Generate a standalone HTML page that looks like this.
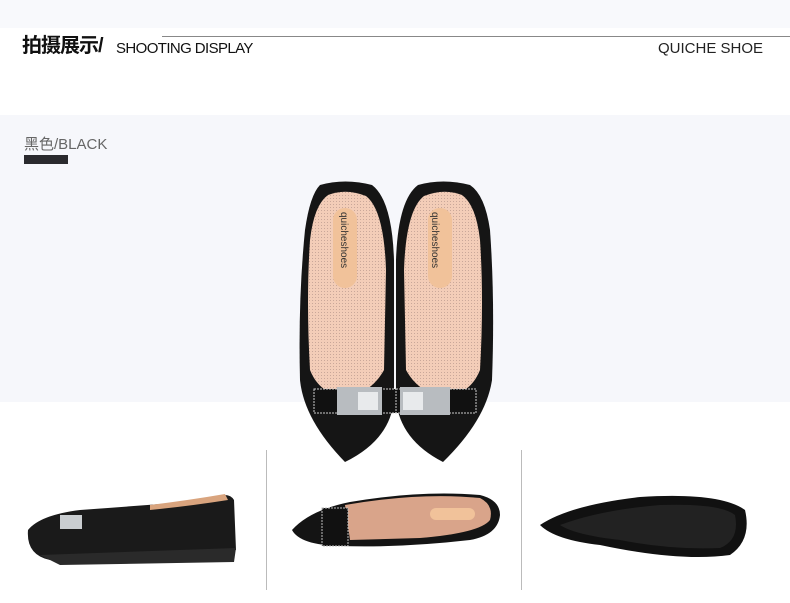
<!DOCTYPE html>
<html><head><meta charset="utf-8"><style>
body{margin:0;width:790px;height:603px;background:#fff;position:relative;overflow:hidden;font-family:"Liberation Sans","Noto Sans CJK SC",sans-serif}
.t{position:absolute;line-height:1}
</style></head><body>
<div class="t" style="left:0;top:0;width:790px;height:28px;background:#f8f9fc"></div>
<div class="t" style="left:162px;top:36px;width:628px;height:1px;background:#888"></div>
<div class="t" style="left:22px;top:36px;font-size:20px;color:#111;letter-spacing:-1px;font-weight:bold">拍摄展示/</div>
<div class="t" style="left:116px;top:41px;font-size:15px;color:#111;letter-spacing:-0.6px">SHOOTING DISPLAY</div>
<div class="t" style="left:658px;top:41px;font-size:15px;color:#222">QUICHE SHOE</div>
<div class="t" style="left:0;top:115px;width:790px;height:287px;background:#f6f7fb"></div>
<div class="t" style="left:24px;top:137px;font-size:15px;color:#666">黑色/BLACK</div>
<div class="t" style="left:24px;top:155px;width:44px;height:9px;background:#2a2a2e"></div>
<div class="t" style="left:266px;top:450px;width:1px;height:140px;background:#bbb"></div>
<div class="t" style="left:521px;top:450px;width:1px;height:140px;background:#bbb"></div>
<svg class="t" style="left:0;top:0" width="790" height="603">
<defs><pattern id="m" width="3" height="3" patternUnits="userSpaceOnUse"><rect width="3" height="3" fill="#f3cdb8"/><rect width="1" height="1" fill="#c9a799"/></pattern></defs>
<path d="M320 185 Q345 178 372 185 Q392 200 394 260 L394 400 Q390 440 345 462 Q304 420 300 380 Q298 300 305 230 Q310 195 320 185Z" fill="#151515"/>
<path d="M328 195 Q346 188 366 196 Q384 210 386 270 L384 370 Q370 395 345 395 Q320 395 310 370 Q306 300 310 240 Q314 205 328 195Z" fill="url(#m)"/>
<rect x="333" y="208" width="24" height="80" rx="12" fill="#f1c29a"/>
<text x="341" y="212" font-size="10" fill="#333" transform="rotate(90 341 212)">quicheshoes</text>
<rect x="314" y="389" width="82" height="24" fill="#111" stroke="#ccc" stroke-dasharray="2 1"/>
<rect x="337" y="387" width="45" height="28" fill="#b8bcc0"/><rect x="358" y="392" width="20" height="18" fill="#e8eaec"/>
<path d="M418 185 Q443 178 470 185 Q485 195 490 230 Q495 300 492 380 Q486 420 443 462 Q400 440 396 400 L396 260 Q398 200 418 185Z" fill="#151515"/>
<path d="M424 196 Q444 188 462 195 Q476 205 480 240 Q484 300 480 370 Q470 395 445 395 Q420 395 406 370 L404 270 Q406 210 424 196Z" fill="url(#m)"/>
<rect x="428" y="208" width="24" height="80" rx="12" fill="#f1c29a"/>
<text x="432" y="212" font-size="10" fill="#333" transform="rotate(90 432 212)">quicheshoes</text>
<rect x="396" y="389" width="80" height="24" fill="#111" stroke="#ccc" stroke-dasharray="2 1"/>
<rect x="400" y="387" width="50" height="28" fill="#b8bcc0"/><rect x="403" y="392" width="20" height="18" fill="#e8eaec"/>
<path d="M28 530 Q40 515 80 510 Q150 505 210 500 Q228 490 234 500 L236 550 L50 560 Q26 555 28 530Z" fill="#1a1a1a"/>
<path d="M150 505 Q190 500 225 494 L228 500 Q190 506 150 510Z" fill="#d9a47e"/>
<path d="M40 555 L236 548 L234 562 L60 565Z" fill="#2a2a2a"/>
<rect x="60" y="515" width="22" height="14" fill="#c9cdd0"/>
<path d="M292 530 Q310 510 350 502 Q420 490 480 495 Q500 500 500 515 Q498 535 470 540 Q400 548 340 546 Q300 545 292 530Z" fill="#141414"/>
<path d="M345 505 Q420 492 480 498 Q494 505 490 520 Q480 533 420 538 L350 540Z" fill="#d9a48a"/>
<rect x="430" y="508" width="45" height="12" rx="6" fill="#f1c29a"/>
<rect x="322" y="508" width="26" height="38" fill="#111" stroke="#bbb" stroke-dasharray="2 1"/>
<path d="M540 525 Q570 505 640 497 Q720 492 745 510 Q752 540 730 555 Q680 562 600 545 Q555 540 540 525Z" fill="#111"/>
<path d="M560 525 Q600 510 660 505 Q720 503 735 515 Q740 540 720 548 Q670 550 620 540 Q575 535 560 525Z" fill="#222"/>
</svg>
</body></html>
